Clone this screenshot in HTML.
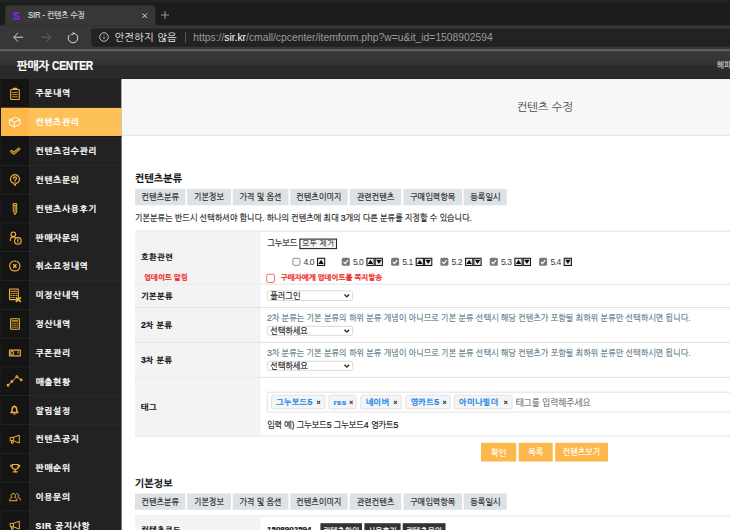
<!DOCTYPE html>
<html lang="ko">
<head>
<meta charset="utf-8">
<title>SIR - 컨텐츠 수정</title>
<style>
*{box-sizing:border-box;margin:0;padding:0}
html,body{width:730px;height:530px;overflow:hidden;background:#fff}
body{position:relative;font-family:"Liberation Sans","NanumGothic","Noto Sans CJK KR",sans-serif;font-size:8px;color:#222;line-height:1}
#bg{position:absolute;left:0;top:0;width:730px;height:530px}
.t{position:absolute;white-space:nowrap;height:12px;line-height:12px;-webkit-text-stroke:.18px}
.n{-webkit-text-stroke:0}
.v{transform:scaleY(1.12)}
.c{text-align:center}
.ic{position:absolute;width:16px;height:16px;overflow:visible}
.a{position:absolute}
</style>
</head>
<body>
<svg id="bg" viewBox="0 0 730 530">
<rect x="0.00" y="0.00" width="730.00" height="26.00" fill="#1c1c1c"/>
<rect x="0.00" y="0.00" width="730.00" height="2.40" fill="#232323"/>
<path d="M2.200 25.600a3 3 0 0 0 3-3V9.300a4 4 0 0 1 4-4h142.100a4 4 0 0 1 4 4v13.300a3 3 0 0 0 3 3z" fill="#373737"/>
<rect x="0.00" y="25.40" width="730.00" height="24.10" fill="#373737"/>
<rect x="0.00" y="49.30" width="730.00" height="1.00" fill="#414141"/>
<rect x="91.200" y="28.500" width="650" height="18.200" rx="2" fill="#222"/>
<rect x="185.00" y="32.00" width="0.90" height="11.00" fill="#585858"/>
<defs><linearGradient id="hg" x1="0" y1="0" x2="0" y2="1"><stop offset="0" stop-color="#3a3a3a"/><stop offset=".48" stop-color="#343434"/><stop offset=".52" stop-color="#2b2b2b"/><stop offset="1" stop-color="#292929"/></linearGradient></defs>
<rect x="0.00" y="50.30" width="730.00" height="28.90" fill="url(#hg)"/>
<rect x="0.00" y="79.00" width="121.60" height="461.00" fill="#222222"/>
<rect x="0.00" y="79.00" width="29.10" height="461.00" fill="#141414"/>
<rect x="29.10" y="79.00" width="0.70" height="461.00" fill="#282828"/>
<rect x="0.00" y="107.25" width="121.60" height="0.60" fill="#131313"/>
<rect x="0.00" y="107.85" width="121.60" height="28.14" fill="#fec059"/>
<rect x="0.00" y="107.85" width="28.30" height="28.14" fill="#fdb748"/>
<rect x="0.00" y="135.99" width="121.60" height="0.65" fill="#131313"/>
<rect x="0.00" y="164.98" width="121.60" height="0.70" fill="#2c2c2c"/>
<rect x="0.00" y="193.77" width="121.60" height="0.70" fill="#2c2c2c"/>
<rect x="0.00" y="222.56" width="121.60" height="0.70" fill="#2c2c2c"/>
<rect x="0.00" y="251.35" width="121.60" height="0.70" fill="#2c2c2c"/>
<rect x="0.00" y="280.14" width="121.60" height="0.70" fill="#2c2c2c"/>
<rect x="0.00" y="308.93" width="121.60" height="0.70" fill="#2c2c2c"/>
<rect x="0.00" y="337.72" width="121.60" height="0.70" fill="#2c2c2c"/>
<rect x="0.00" y="366.51" width="121.60" height="0.70" fill="#2c2c2c"/>
<rect x="0.00" y="395.30" width="121.60" height="0.70" fill="#2c2c2c"/>
<rect x="0.00" y="424.09" width="121.60" height="0.70" fill="#2c2c2c"/>
<rect x="0.00" y="452.88" width="121.60" height="0.70" fill="#2c2c2c"/>
<rect x="0.00" y="481.67" width="121.60" height="0.70" fill="#2c2c2c"/>
<rect x="0.00" y="510.46" width="121.60" height="0.70" fill="#2c2c2c"/>
<rect x="0.00" y="79.00" width="1.00" height="461.00" fill="#1a1a1a"/>
<defs><pattern id="pp" width="2.5" height="2.5" patternUnits="userSpaceOnUse"><rect width="2.5" height="2.5" fill="#fafafa"/><rect width="1.25" height="1.25" fill="#f4f4f4"/><rect x="1.25" y="1.25" width="1.25" height="1.25" fill="#f4f4f4"/></pattern></defs>
<rect x="121.60" y="79.20" width="608.40" height="56.00" fill="url(#pp)"/>
<rect x="121.60" y="134.80" width="608.40" height="0.90" fill="#dcdcdc"/>
<rect x="135.00" y="188.90" width="50.40" height="16.40" fill="#dde2e6"/>
<rect x="187.10" y="188.90" width="43.90" height="16.40" fill="#dde2e6"/>
<rect x="232.70" y="188.90" width="55.80" height="16.40" fill="#dde2e6"/>
<rect x="290.20" y="188.90" width="57.40" height="16.40" fill="#dde2e6"/>
<rect x="349.70" y="188.90" width="51.50" height="16.40" fill="#dde2e6"/>
<rect x="403.50" y="188.90" width="58.50" height="16.40" fill="#dde2e6"/>
<rect x="463.60" y="188.90" width="43.20" height="16.40" fill="#dde2e6"/>
<rect x="135.00" y="230.70" width="600.00" height="1.00" fill="#e3e3e3"/>
<rect x="135.00" y="231.70" width="125.50" height="52.00" fill="#f3f3f3"/>
<rect x="135.00" y="283.70" width="600.00" height="1.00" fill="#e3e3e3"/>
<rect x="135.00" y="284.70" width="125.50" height="22.30" fill="#f3f3f3"/>
<rect x="135.00" y="307.00" width="600.00" height="1.00" fill="#e3e3e3"/>
<rect x="135.00" y="308.00" width="125.50" height="33.90" fill="#f3f3f3"/>
<rect x="135.00" y="341.90" width="600.00" height="1.00" fill="#e3e3e3"/>
<rect x="135.00" y="342.90" width="125.50" height="33.90" fill="#f3f3f3"/>
<rect x="135.00" y="376.80" width="600.00" height="1.00" fill="#e3e3e3"/>
<rect x="135.00" y="377.80" width="125.50" height="57.80" fill="#f3f3f3"/>
<rect x="135.00" y="435.60" width="600.00" height="1.00" fill="#e3e3e3"/>
<rect x="299.900" y="239.100" width="36.600" height="9.500" fill="#f4f4f4" stroke="#262626" stroke-width="1.100"/>
<rect x="292.9" y="258.300" width="7" height="7" rx="1.300" fill="#fff" stroke="#8a8a8a" stroke-width="1"/>
<rect x="317.5" y="258.300" width="7.200" height="7.200" fill="#ededed" stroke="#1c1c1c" stroke-width="1.100"/>
<path d="M321.1 259.700l2.700 4.400h-5.400z" fill="#0a0a0a"/>
<rect x="341.8" y="257.800" width="8" height="8" rx="1.500" fill="#787878"/><path d="M343.6 262l1.600 1.600 2.800-3.400" fill="none" stroke="#fff" stroke-width="1.200"/>
<rect x="366.9" y="258.300" width="7.200" height="7.200" fill="#ededed" stroke="#1c1c1c" stroke-width="1.100"/>
<path d="M370.5 259.700l2.700 4.400h-5.400z" fill="#0a0a0a"/>
<rect x="375.2" y="258.300" width="7.200" height="7.200" fill="#ededed" stroke="#1c1c1c" stroke-width="1.100"/>
<path d="M378.9 264.100l2.700-4.400h-5.400z" fill="#0a0a0a"/>
<rect x="391.1" y="257.800" width="8" height="8" rx="1.500" fill="#787878"/><path d="M392.9 262l1.600 1.600 2.800-3.400" fill="none" stroke="#fff" stroke-width="1.200"/>
<rect x="416.2" y="258.300" width="7.200" height="7.200" fill="#ededed" stroke="#1c1c1c" stroke-width="1.100"/>
<path d="M419.8 259.700l2.700 4.400h-5.400z" fill="#0a0a0a"/>
<rect x="424.6" y="258.300" width="7.200" height="7.200" fill="#ededed" stroke="#1c1c1c" stroke-width="1.100"/>
<path d="M428.2 264.100l2.700-4.400h-5.400z" fill="#0a0a0a"/>
<rect x="440.4" y="257.800" width="8" height="8" rx="1.500" fill="#787878"/><path d="M442.2 262l1.600 1.600 2.800-3.400" fill="none" stroke="#fff" stroke-width="1.200"/>
<rect x="465.6" y="258.300" width="7.200" height="7.200" fill="#ededed" stroke="#1c1c1c" stroke-width="1.100"/>
<path d="M469.2 259.700l2.700 4.400h-5.400z" fill="#0a0a0a"/>
<rect x="473.9" y="258.300" width="7.200" height="7.200" fill="#ededed" stroke="#1c1c1c" stroke-width="1.100"/>
<path d="M477.6 264.100l2.700-4.400h-5.400z" fill="#0a0a0a"/>
<rect x="489.8" y="257.800" width="8" height="8" rx="1.500" fill="#787878"/><path d="M491.6 262l1.600 1.600 2.800-3.400" fill="none" stroke="#fff" stroke-width="1.200"/>
<rect x="514.9" y="258.300" width="7.200" height="7.200" fill="#ededed" stroke="#1c1c1c" stroke-width="1.100"/>
<path d="M518.5 259.700l2.700 4.400h-5.400z" fill="#0a0a0a"/>
<rect x="523.3" y="258.300" width="7.200" height="7.200" fill="#ededed" stroke="#1c1c1c" stroke-width="1.100"/>
<path d="M526.9 264.100l2.700-4.400h-5.400z" fill="#0a0a0a"/>
<rect x="539.1" y="257.800" width="8" height="8" rx="1.500" fill="#787878"/><path d="M540.9 262l1.600 1.600 2.800-3.400" fill="none" stroke="#fff" stroke-width="1.200"/>
<rect x="564.2" y="258.300" width="7.200" height="7.200" fill="#ededed" stroke="#1c1c1c" stroke-width="1.100"/>
<path d="M567.9 264.100l2.700-4.400h-5.400z" fill="#0a0a0a"/>
<rect x="266.700" y="274.300" width="7.800" height="8.200" rx="1.500" fill="#fff" stroke="#f87272" stroke-width="1"/>
<rect x="267.300" y="290.8" width="85.400" height="9.7" rx="1.800" fill="#fff" stroke="#d9d9d9" stroke-width="1"/>
<path d="M344.5 294.5l2.300 2.400 2.300-2.400" fill="none" stroke="#222" stroke-width="1.300"/>
<rect x="267.300" y="326.3" width="85.400" height="9.0" rx="1.800" fill="#fff" stroke="#d9d9d9" stroke-width="1"/>
<path d="M344.5 329.7l2.300 2.400 2.300-2.400" fill="none" stroke="#222" stroke-width="1.300"/>
<rect x="267.300" y="361.3" width="85.400" height="9.0" rx="1.800" fill="#fff" stroke="#d9d9d9" stroke-width="1"/>
<path d="M344.5 364.7l2.300 2.400 2.300-2.400" fill="none" stroke="#222" stroke-width="1.300"/>
<rect x="267.300" y="392.200" width="480" height="19.800" fill="#fff" stroke="#e3e3e3" stroke-width="1"/>
<rect x="271.5" y="395.200" width="53.3" height="13.700" rx="1.500" fill="#f5f5f5" stroke="#e2e2e2" stroke-width="1"/>
<path d="M317.1 400.800l3 3M320.1 400.800l-3 3" stroke="#444" stroke-width="1.100"/>
<rect x="329.0" y="395.200" width="27.1" height="13.700" rx="1.500" fill="#f5f5f5" stroke="#e2e2e2" stroke-width="1"/>
<path d="M349.7 400.800l3 3M352.7 400.800l-3 3" stroke="#444" stroke-width="1.100"/>
<rect x="360.8" y="395.200" width="40.4" height="13.700" rx="1.500" fill="#f5f5f5" stroke="#e2e2e2" stroke-width="1"/>
<path d="M394.0 400.800l3 3M397.0 400.800l-3 3" stroke="#444" stroke-width="1.100"/>
<rect x="405.9" y="395.200" width="44.2" height="13.700" rx="1.500" fill="#f5f5f5" stroke="#e2e2e2" stroke-width="1"/>
<path d="M443.1 400.800l3 3M446.1 400.800l-3 3" stroke="#444" stroke-width="1.100"/>
<rect x="454.5" y="395.200" width="57.6" height="13.700" rx="1.500" fill="#f5f5f5" stroke="#e2e2e2" stroke-width="1"/>
<path d="M504.3 400.800l3 3M507.3 400.800l-3 3" stroke="#444" stroke-width="1.100"/>
<rect x="481.00" y="442.80" width="35.20" height="18.70" fill="#fdb84b"/>
<rect x="518.70" y="442.80" width="34.00" height="18.70" fill="#fdb84b"/>
<rect x="555.20" y="442.80" width="52.80" height="18.70" fill="#fdb84b"/>
<rect x="135.00" y="493.50" width="50.40" height="16.30" fill="#dde2e6"/>
<rect x="187.10" y="493.50" width="43.90" height="16.30" fill="#dde2e6"/>
<rect x="232.70" y="493.50" width="55.80" height="16.30" fill="#dde2e6"/>
<rect x="290.20" y="493.50" width="57.40" height="16.30" fill="#dde2e6"/>
<rect x="349.70" y="493.50" width="51.50" height="16.30" fill="#dde2e6"/>
<rect x="403.50" y="493.50" width="58.50" height="16.30" fill="#dde2e6"/>
<rect x="463.60" y="493.50" width="43.20" height="16.30" fill="#dde2e6"/>
<rect x="135.00" y="515.50" width="600.00" height="1.00" fill="#e3e3e3"/>
<rect x="135.00" y="516.50" width="125.50" height="23.50" fill="#f3f3f3"/>
<rect x="320.40" y="523.20" width="41.60" height="16.80" fill="#333"/>
<rect x="364.40" y="523.20" width="36.20" height="16.80" fill="#333"/>
<rect x="402.70" y="523.20" width="42.80" height="16.80" fill="#333"/>
</svg>
<div class="t" style="left:12.800px;top:8.800px;height:14px;line-height:14px;font-size:10.800px;font-weight:bold;color:#8d1df2;font-family:'Liberation Sans',sans-serif">S</div>
<div class="t v" style="left:28.0px;top:10.4px;font-size:7.6px;color:#dcdcdc;letter-spacing:-0.05px;">SIR - 컨텐츠 수정</div>
<svg class="a" style="left:142.300px;top:13px;width:5.400px;height:5.400px" viewBox="0 0 6 6"><path d="M.5.500l5 5M5.500.5L.5 5.500" stroke="#ececec" stroke-width="1"/></svg>
<svg class="a" style="left:161.200px;top:11.400px;width:8px;height:8px" viewBox="0 0 8 8"><path d="M4 0v8M0 4h8" stroke="#c4c4c4" stroke-width=".7"/></svg>
<svg class="a" style="left:13px;top:32.300px;width:10.500px;height:10.400px" viewBox="0 0 10.500 10" fill="none" stroke="#dedede" stroke-width=".95"><path d="M10.200 5H.8M5 .600L.8 5 5 9.400"/></svg>
<svg class="a" style="left:40.500px;top:32.300px;width:10.500px;height:10.400px" viewBox="0 0 10.500 10" fill="none" stroke="#686868" stroke-width=".95"><path d="M.3 5h9.400M5.500.600L9.700 5 5.500 9.400"/></svg>
<svg class="a" style="left:67.400px;top:32px;width:12px;height:12px" viewBox="0 0 12 12" fill="none" stroke="#dedede" stroke-width=".95"><path d="M6 1.200A4.800 4.800 0 1 1 2.200 3.100"/><path d="M6.100 0v2.600H3.600" stroke-width=".8"/></svg>
<svg class="a" style="left:98.800px;top:32.400px;width:10px;height:10px" viewBox="0 0 10 10" fill="none" stroke="#e4e4e4" stroke-width=".8"><circle cx="5" cy="5" r="4.300"/><path d="M5 4.500v2.700M5 2.800v.7" stroke-width=".75"/></svg>
<div class="t n" style="left:114.600px;top:30.600px;height:14px;line-height:14px;font-size:10.300px;color:#f0f0f0;letter-spacing:.2px">안전하지 않음</div>
<div class="t n" style="left:193.300px;top:30.800px;height:14px;line-height:14px;font-size:10.350px;letter-spacing:-.01px;color:#9a9a9a">https://<span style="color:#fff">sir.kr</span>/cmall/cpcenter/itemform.php?w=u&amp;it_id=1508902594</div>
<div class="t" style="left:16.800px;top:57.600px;height:16px;line-height:16px;font-size:11.600px;font-weight:bold;color:#fff;letter-spacing:-.2px">판매자 <span style="display:inline-block;transform:scaleX(.86);transform-origin:0 50%;font-size:11.900px">CENTER</span></div>
<div class="t v" style="left:717.0px;top:59.8px;font-size:7.5px;color:#cfcfcf;">해피</div>
<svg class="ic" style="left:7.0px;top:85.5px;width:16px;height:16px" viewBox="0 0 16 16" fill="none" stroke="#f0b13e" stroke-width="1.1" stroke-linecap="round" stroke-linejoin="round"><rect x="3.700" y="3.500" width="8.600" height="10" rx=".7"/><path d="M6.300 3.500V2.300h3.400v1.200" stroke-width="1.200"/><path d="M5.600 6.400h4.800M5.600 8.600h4.800M5.600 10.800h4.800" stroke-width=".8"/></svg>
<div class="t" style="left:35.500px;top:87px;font-size:8.600px;color:#fff;font-weight:bold;letter-spacing:.72px">주문내역</div>
<svg class="ic" style="left:7.0px;top:114.3px;width:16px;height:16px" viewBox="0 0 16 16" fill="none" stroke="#fff" stroke-width="1.1" stroke-linecap="round" stroke-linejoin="round"><path d="M2.800 5.900 8.600 3.300l4.400 2.300v4.900L7.200 12.900 2.800 10.500zM2.800 5.900l4.400 2.300 5.800-2.600M7.200 8.200v4.700" stroke-width="1"/></svg>
<div class="t" style="left:35.500px;top:116px;font-size:8.600px;color:#fff;font-weight:bold;letter-spacing:.72px">컨텐츠관리</div>
<svg class="ic" style="left:7.0px;top:143.1px;width:16px;height:16px" viewBox="0 0 16 16" fill="none" stroke="#f0b13e" stroke-width="1.1" stroke-linecap="round" stroke-linejoin="round"><path d="M4.500 8.300l2.300 2 5.200-4.400" stroke-width="2.700"/><path d="M4.500 8.300l2.300 2 5.200-4.400" stroke="#141414" stroke-width=".8"/></svg>
<div class="t" style="left:35.500px;top:145px;font-size:8.600px;color:#fff;font-weight:bold;letter-spacing:.72px">컨텐츠검수관리</div>
<svg class="ic" style="left:7.0px;top:171.9px;width:16px;height:16px" viewBox="0 0 16 16" fill="none" stroke="#f0b13e" stroke-width="1.1" stroke-linecap="round" stroke-linejoin="round"><path d="M6.900 11.500A4.500 4.500 0 1 1 9.100 11.500L8 13.600z"/><path d="M6.500 6.300c0-2 3-2 3 0 0 1.100-1.500 1.100-1.500 2.300" stroke-width="1.300"/><path d="M8 9.900v.3" stroke-width="1.300"/></svg>
<div class="t" style="left:35.500px;top:174px;font-size:8.600px;color:#fff;font-weight:bold;letter-spacing:.72px">컨텐츠문의</div>
<svg class="ic" style="left:7.0px;top:200.7px;width:16px;height:16px" viewBox="0 0 16 16" fill="none" stroke="#f0b13e" stroke-width="1.1" stroke-linecap="round" stroke-linejoin="round"><path d="M6.500 2.600h3.200v8.300L8.100 13.700 6.500 10.900z" stroke-width="1"/><path d="M6.500 4.300h3.200" stroke-width=".9"/><path d="M8.100 4.600v6.400" stroke-width="1.400" opacity=".75"/></svg>
<div class="t" style="left:35.500px;top:203px;font-size:8.600px;color:#fff;font-weight:bold;letter-spacing:.72px">컨텐츠사용후기</div>
<svg class="ic" style="left:7.0px;top:229.5px;width:16px;height:16px" viewBox="0 0 16 16" fill="none" stroke="#f0b13e" stroke-width="1.1" stroke-linecap="round" stroke-linejoin="round"><circle cx="6.300" cy="4.300" r="2.300"/><path d="M3.300 10.800c-.3-2.600 1-3.900 3-3.900.8 0 1.500.2 2 .6"/><circle cx="10.900" cy="10.900" r="3.300"/><path d="M10.900 9.500v1.700M10.900 12.500v.1" stroke-width="1.200"/></svg>
<div class="t" style="left:35.500px;top:232px;font-size:8.600px;color:#fff;font-weight:bold;letter-spacing:.72px">판매자문의</div>
<svg class="ic" style="left:7.0px;top:258.3px;width:16px;height:16px" viewBox="0 0 16 16" fill="none" stroke="#f0b13e" stroke-width="1.1" stroke-linecap="round" stroke-linejoin="round"><path d="M9.900 3.500A4.900 4.900 0 0 1 7.800 12.900 4.900 4.900 0 0 1 5.700 3.500" /><path d="M6.800 3.100A4.900 4.900 0 0 1 8.800 3.100" /><path d="M6.600 6.800l2.400 2.400M9 6.800l-2.400 2.400" stroke-width="1.500"/></svg>
<div class="t" style="left:35.500px;top:260px;font-size:8.600px;color:#fff;font-weight:bold;letter-spacing:.72px">취소요청내역</div>
<svg class="ic" style="left:7.0px;top:287.0px;width:16px;height:16px" viewBox="0 0 16 16" fill="none" stroke="#f0b13e" stroke-width="1.1" stroke-linecap="round" stroke-linejoin="round"><rect x="2.500" y="2" width="8.800" height="10.600" rx=".5"/><path d="M4 4.200h5.800" stroke-width="1.100"/><path d="M4 6.500h1M6.400 6.500h1M8.800 6.500h1M4 8.500h1M6.400 8.500h1M8.800 8.500h1M4 10.500h1M6.400 10.500h1" stroke-width=".9"/><path d="M9.400 10.800l4 3.600M13.400 10.800l-4 3.600" stroke-width="1.700"/></svg>
<div class="t" style="left:35.500px;top:289px;font-size:8.600px;color:#fff;font-weight:bold;letter-spacing:.72px">미정산내역</div>
<svg class="ic" style="left:7.0px;top:315.8px;width:16px;height:16px" viewBox="0 0 16 16" fill="none" stroke="#f0b13e" stroke-width="1.1" stroke-linecap="round" stroke-linejoin="round"><rect x="3.600" y="2.700" width="8.800" height="10.600" rx=".5"/><path d="M5.200 4.900h5.600" stroke-width="1.100"/><path d="M5.200 7.200h1M7.500 7.200h1M9.800 7.200h1M5.200 9.200h1M7.500 9.200h1M9.800 9.200h1M5.200 11.200h1M7.500 11.200h1M9.800 11.200h1" stroke-width=".9"/></svg>
<div class="t" style="left:35.500px;top:318px;font-size:8.600px;color:#fff;font-weight:bold;letter-spacing:.72px">정산내역</div>
<svg class="ic" style="left:7.0px;top:344.6px;width:16px;height:16px" viewBox="0 0 16 16" fill="none" stroke="#f0b13e" stroke-width="1.1" stroke-linecap="round" stroke-linejoin="round"><rect x="2.500" y="5.100" width="10.800" height="5.800" stroke-width="1.100"/><rect x="4.100" y="6.600" width="2.400" height="2.800" stroke-width=".9"/><path d="M11 6.700v2" stroke-width=".9"/></svg>
<div class="t" style="left:35.500px;top:347px;font-size:8.600px;color:#fff;font-weight:bold;letter-spacing:.72px">쿠폰관리</div>
<svg class="ic" style="left:7.0px;top:373.4px;width:16px;height:16px" viewBox="0 0 16 16" fill="none" stroke="#f0b13e" stroke-width="1.1" stroke-linecap="round" stroke-linejoin="round"><path d="M1.100 12.300l3.800-3.800 4.900-4.900 4.400 3.300" stroke-width="1"/><circle cx="1.100" cy="12.300" r=".9" fill="#141414"/><circle cx="4.900" cy="8.500" r=".9" fill="#141414"/><circle cx="9.800" cy="3.700" r=".9" fill="#141414"/><circle cx="14.200" cy="6.900" r=".9" fill="#141414"/></svg>
<div class="t" style="left:35.500px;top:376px;font-size:8.600px;color:#fff;font-weight:bold;letter-spacing:.72px">매출현황</div>
<svg class="ic" style="left:7.0px;top:402.2px;width:16px;height:16px" viewBox="0 0 16 16" fill="none" stroke="#f0b13e" stroke-width="1.1" stroke-linecap="round" stroke-linejoin="round"><path d="M3.900 10.600c1.100-.8 1.100-2 1.300-3.600.2-1.600 1-2.500 2.200-2.500s2 .9 2.200 2.500c.2 1.600.2 2.800 1.300 3.600z" stroke-width="1.500"/><path d="M6.600 12h1.600" stroke-width="1.200"/><path d="M7.400 3.900v.4"/></svg>
<div class="t" style="left:35.500px;top:405px;font-size:8.600px;color:#fff;font-weight:bold;letter-spacing:.72px">알림설정</div>
<svg class="ic" style="left:7.0px;top:431.0px;width:16px;height:16px" viewBox="0 0 16 16" fill="none" stroke="#f0b13e" stroke-width="1.1" stroke-linecap="round" stroke-linejoin="round"><path d="M3.600 6.400h2.800l5.900-2.200v7.800L6.400 9.800H3.600zM6.400 6.500v3.200" stroke-width="1"/><path d="M4.500 9.900v2.300h1.600V9.900" stroke-width="1"/></svg>
<div class="t" style="left:35.500px;top:433px;font-size:8.600px;color:#fff;font-weight:bold;letter-spacing:.72px">컨텐츠공지</div>
<svg class="ic" style="left:7.0px;top:459.8px;width:16px;height:16px" viewBox="0 0 16 16" fill="none" stroke="#f0b13e" stroke-width="1.1" stroke-linecap="round" stroke-linejoin="round"><path d="M5.200 4.500h6v1.900c0 2-1.300 2.900-3 2.900s-3-.9-3-2.900z"/><path d="M5.200 5.200H3.600c0 1.600.7 2.400 1.900 2.600M11.200 5.200h1.600c0 1.600-.7 2.400-1.900 2.600"/><path d="M8.200 9.400v1.600M6.200 11.800h4" stroke-width="1.300"/></svg>
<div class="t" style="left:35.500px;top:462px;font-size:8.600px;color:#fff;font-weight:bold;letter-spacing:.72px">판매순위</div>
<svg class="ic" style="left:7.0px;top:488.6px;width:16px;height:16px" viewBox="0 0 16 16" fill="none" stroke="#f0b13e" stroke-width="1.1" stroke-linecap="round" stroke-linejoin="round"><path d="M6.400 4.500c1.300 0 2.100.9 2.100 2 0 .9-.4 1.500-1 1.900 1.500.4 2.400 1.400 2.500 3.300H2.600c.1-1.900 1-2.900 2.500-3.300-.6-.4-1-1-1-1.900 0-1.100 1-2 2.300-2z" stroke-width="1"/><path d="M9.800 4.600c1.200 0 1.900.8 1.900 1.800 0 .7-.3 1.300-.9 1.600 1.500.4 2.400 1.400 2.600 3.000" stroke-width="1"/></svg>
<div class="t" style="left:35.500px;top:491px;font-size:8.600px;color:#fff;font-weight:bold;letter-spacing:.72px">이용문의</div>
<svg class="ic" style="left:7.0px;top:517.4px;width:16px;height:16px" viewBox="0 0 16 16" fill="none" stroke="#f0b13e" stroke-width="1.1" stroke-linecap="round" stroke-linejoin="round"><path d="M3.600 6.400h2.800l5.900-2.200v7.800L6.400 9.800H3.600zM6.400 6.500v3.200" stroke-width="1"/><path d="M4.500 9.900v2.300h1.600V9.900" stroke-width="1"/></svg>
<div class="t" style="left:35.500px;top:520px;font-size:8.600px;color:#fff;font-weight:bold;letter-spacing:.72px">SIR 공지사항</div>
<div class="t n" style="left:516.200px;top:99.200px;height:16px;line-height:16px;font-size:11.500px;color:#4a4a4a">컨텐츠 수정</div>
<div class="t" style="left:134.7px;top:173.0px;font-size:10px;color:#111;font-weight:bold;letter-spacing:0.1px;">컨텐츠분류</div>
<div class="t v c" style="left:135.0px;top:192.3px;font-size:8px;color:#222;width:50.4px;">컨텐츠분류</div>
<div class="t v c" style="left:187.1px;top:192.3px;font-size:8px;color:#222;width:43.9px;">기본정보</div>
<div class="t v c" style="left:232.7px;top:192.3px;font-size:8px;color:#222;width:55.8px;">가격 및 옵션</div>
<div class="t v c" style="left:290.2px;top:192.3px;font-size:8px;color:#222;width:57.4px;">컨텐츠이미지</div>
<div class="t v c" style="left:349.7px;top:192.3px;font-size:8px;color:#222;width:51.5px;">관련컨텐츠</div>
<div class="t v c" style="left:403.5px;top:192.3px;font-size:8px;color:#222;width:58.5px;">구매입력항목</div>
<div class="t v c" style="left:463.6px;top:192.3px;font-size:8px;color:#222;width:43.2px;">등록일시</div>
<div class="t v" style="left:135.0px;top:212.7px;font-size:8px;color:#222;">기본분류는 반드시 선택하셔야 합니다. 하나의 컨텐츠에 최대 <span style="font-size:1.1em;line-height:0;letter-spacing:-.1px">3</span>개의 다른 분류를 지정할 수 있습니다.</div>
<div class="t" style="left:141.0px;top:252.0px;font-size:8px;color:#111;font-weight:bold;letter-spacing:0.45px;">호환관련</div>
<div class="t" style="left:141.0px;top:290.8px;font-size:8px;color:#111;font-weight:bold;letter-spacing:0.45px;">기본분류</div>
<div class="t" style="left:141.0px;top:319.7px;font-size:8px;color:#111;font-weight:bold;letter-spacing:0.45px;"><span style="font-size:1.1em;line-height:0;letter-spacing:-.1px">2</span>차 분류</div>
<div class="t" style="left:141.0px;top:354.7px;font-size:8px;color:#111;font-weight:bold;letter-spacing:0.45px;"><span style="font-size:1.1em;line-height:0;letter-spacing:-.1px">3</span>차 분류</div>
<div class="t" style="left:141.0px;top:402.0px;font-size:8px;color:#111;font-weight:bold;letter-spacing:0.45px;">태그</div>
<div class="t" style="left:144.0px;top:271.8px;font-size:7.4px;color:#f0231c;font-weight:bold;">업데이트 알림</div>
<div class="t v" style="left:267.2px;top:238.3px;font-size:8px;color:#111;">그누보드</div>
<div class="t n c" style="left:299.6px;top:238.1px;font-size:7.5px;color:#000;letter-spacing:0.35px;width:37.5px;">모두 제거</div>
<div class="t n" style="left:303.6px;top:255.9px;font-size:8.6px;color:#3a3a3a;letter-spacing:-0.5px;">4.0</div>
<div class="t n" style="left:352.9px;top:255.9px;font-size:8.6px;color:#3a3a3a;letter-spacing:-0.5px;">5.0</div>
<div class="t n" style="left:402.3px;top:255.9px;font-size:8.6px;color:#3a3a3a;letter-spacing:-0.5px;">5.1</div>
<div class="t n" style="left:451.6px;top:255.9px;font-size:8.6px;color:#3a3a3a;letter-spacing:-0.5px;">5.2</div>
<div class="t n" style="left:501.0px;top:255.9px;font-size:8.6px;color:#3a3a3a;letter-spacing:-0.5px;">5.3</div>
<div class="t n" style="left:550.4px;top:255.9px;font-size:8.6px;color:#3a3a3a;letter-spacing:-0.5px;">5.4</div>
<div class="t" style="left:280.8px;top:271.8px;font-size:7.4px;color:#f0231c;font-weight:bold;">구매자에게 업데이트를 쪽지발송</div>
<div class="t v" style="left:270.2px;top:290.8px;font-size:8px;color:#111;">플러그인</div>
<div class="t v" style="left:267.0px;top:312.8px;font-size:8px;color:#5f7d8c;letter-spacing:0.04px;"><span style="font-size:1.1em;line-height:0;letter-spacing:-.1px">2</span>차 분류는 기본 분류의 하위 분류 개념이 아니므로 기본 분류 선택시 해당 컨텐츠가 포함될 최하위 분류만 선택하시면 됩니다.</div>
<div class="t v" style="left:270.2px;top:325.9px;font-size:8px;color:#111;">선택하세요</div>
<div class="t v" style="left:267.0px;top:347.6px;font-size:8px;color:#5f7d8c;letter-spacing:0.04px;"><span style="font-size:1.1em;line-height:0;letter-spacing:-.1px">3</span>차 분류는 기본 분류의 하위 분류 개념이 아니므로 기본 분류 선택시 해당 컨텐츠가 포함될 최하위 분류만 선택하시면 됩니다.</div>
<div class="t v" style="left:270.2px;top:360.9px;font-size:8px;color:#111;">선택하세요</div>
<div class="t" style="left:276.0px;top:397.3px;font-size:8px;color:#2389e8;font-weight:bold;letter-spacing:0.35px;">그누보드<span style="font-size:1.1em;line-height:0;letter-spacing:-.1px">5</span></div>
<div class="t" style="left:333.4px;top:397.3px;font-size:8px;color:#2389e8;font-weight:bold;letter-spacing:0.35px;">rss</div>
<div class="t" style="left:365.5px;top:397.3px;font-size:8px;color:#2389e8;font-weight:bold;letter-spacing:0.35px;">네이버</div>
<div class="t" style="left:410.5px;top:397.3px;font-size:8px;color:#2389e8;font-weight:bold;letter-spacing:0.35px;">영카트<span style="font-size:1.1em;line-height:0;letter-spacing:-.1px">5</span></div>
<div class="t" style="left:459.0px;top:397.3px;font-size:8px;color:#2389e8;font-weight:bold;letter-spacing:0.35px;">아미나빌더</div>
<div class="t v" style="left:515.5px;top:396.8px;font-size:8.6px;color:#777;">태그를 입력해주세요</div>
<div class="t v" style="left:267.0px;top:419.7px;font-size:8px;color:#111;">입력 예) 그누보드<span style="font-size:1.1em;line-height:0;letter-spacing:-.1px">5</span> 그누보드<span style="font-size:1.1em;line-height:0;letter-spacing:-.1px">4</span> 영카트<span style="font-size:1.1em;line-height:0;letter-spacing:-.1px">5</span></div>
<div class="t v c" style="left:481.0px;top:447.6px;font-size:8px;color:#fff;width:35.2px;">확인</div>
<div class="t v c" style="left:518.7px;top:447.0px;font-size:8px;color:#fff;width:34.0px;">목록</div>
<div class="t v c" style="left:555.2px;top:447.0px;font-size:8px;color:#fff;width:52.8px;">컨텐츠보기</div>
<div class="t" style="left:134.7px;top:477.8px;font-size:10px;color:#111;font-weight:bold;letter-spacing:0.1px;">기본정보</div>
<div class="t v c" style="left:135.0px;top:496.8px;font-size:8px;color:#222;width:50.4px;">컨텐츠분류</div>
<div class="t v c" style="left:187.1px;top:496.8px;font-size:8px;color:#222;width:43.9px;">기본정보</div>
<div class="t v c" style="left:232.7px;top:496.8px;font-size:8px;color:#222;width:55.8px;">가격 및 옵션</div>
<div class="t v c" style="left:290.2px;top:496.8px;font-size:8px;color:#222;width:57.4px;">컨텐츠이미지</div>
<div class="t v c" style="left:349.7px;top:496.8px;font-size:8px;color:#222;width:51.5px;">관련컨텐츠</div>
<div class="t v c" style="left:403.5px;top:496.8px;font-size:8px;color:#222;width:58.5px;">구매입력항목</div>
<div class="t v c" style="left:463.6px;top:496.8px;font-size:8px;color:#222;width:43.2px;">등록일시</div>
<div class="t" style="left:141.0px;top:525.3px;font-size:8px;color:#111;font-weight:bold;letter-spacing:0.45px;">컨텐츠코드</div>
<div class="t" style="left:267.0px;top:524.3px;font-size:8px;color:#111;font-weight:bold;">1508902594</div>
<div class="t v c" style="left:320.4px;top:525.6px;font-size:7.6px;color:#fff;width:41.6px;">컨텐츠확인</div>
<div class="t v c" style="left:364.4px;top:525.6px;font-size:7.6px;color:#fff;width:36.2px;">사용후기</div>
<div class="t v c" style="left:402.7px;top:525.6px;font-size:7.6px;color:#fff;width:42.8px;">컨텐츠문의</div>
</body>
</html>
